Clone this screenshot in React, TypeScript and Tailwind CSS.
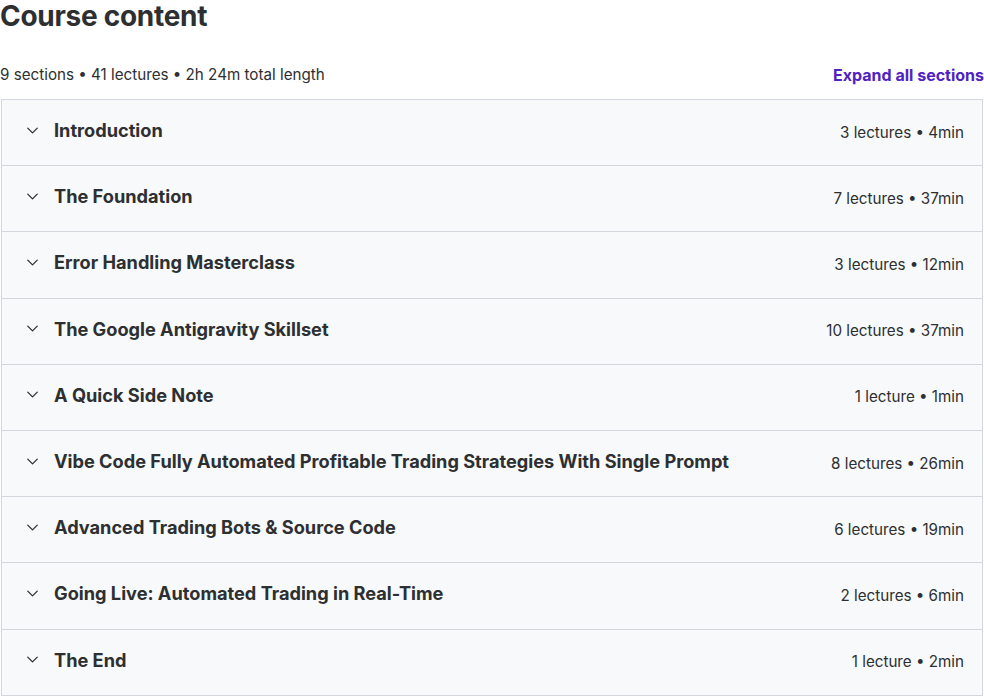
import { ChevronDown } from 'lucide-react';

const sections = [
  { title: 'Introduction', meta: '3 lectures • 4min' },
  { title: 'The Foundation', meta: '7 lectures • 37min' },
  { title: 'Error Handling Masterclass', meta: '3 lectures • 12min' },
  { title: 'The Google Antigravity Skillset', meta: '10 lectures • 37min' },
  { title: 'A Quick Side Note', meta: '1 lecture • 1min' },
  { title: 'Vibe Code Fully Automated Profitable Trading Strategies With Single Prompt', meta: '8 lectures • 26min' },
  { title: 'Advanced Trading Bots & Source Code', meta: '6 lectures • 19min' },
  { title: 'Going Live: Automated Trading in Real-Time', meta: '2 lectures • 6min' },
  { title: 'The End', meta: '1 lecture • 2min' },
];

export default function App() {
  return (
    <div className="w-[984px] h-[696px] overflow-hidden bg-white text-[#2d2f31] font-['Inter',sans-serif]">
      <h2 className="text-[28px] leading-[32px] font-bold tracking-[-0.01em]">Course content</h2>

      <div className="flex items-end justify-between mt-[33px] mb-[14px]">
        <span className="text-[15.2px] leading-[20px] text-[#2d2f31]">
          9 sections • 41 lectures • 2h 24m total length
        </span>
        <button className="text-[16px] leading-[20px] font-bold text-[#5022c3]">
          Expand all sections
        </button>
      </div>

      <div className="ml-px mr-px border-x border-b border-[#d1d7dc]">
        {sections.map((s) => (
          <div
            key={s.title}
            className="flex items-center justify-between h-[66.2px] bg-[#f7f9fa] pl-[21px] pr-[18px] border-t border-[#d1d7dc]"
          >
            <div className="flex items-center gap-[12px] -mt-[5px]">
              <ChevronDown className="w-[19px] h-[19px] text-[#2d2f31]" strokeWidth={1.6} />
              <span className="text-[18.2px] leading-[22px] font-bold">{s.title}</span>
            </div>
            <span className="text-[15.2px] leading-[20px] text-[#2d2f31]">{s.meta}</span>
          </div>
        ))}
      </div>
    </div>
  );
}
